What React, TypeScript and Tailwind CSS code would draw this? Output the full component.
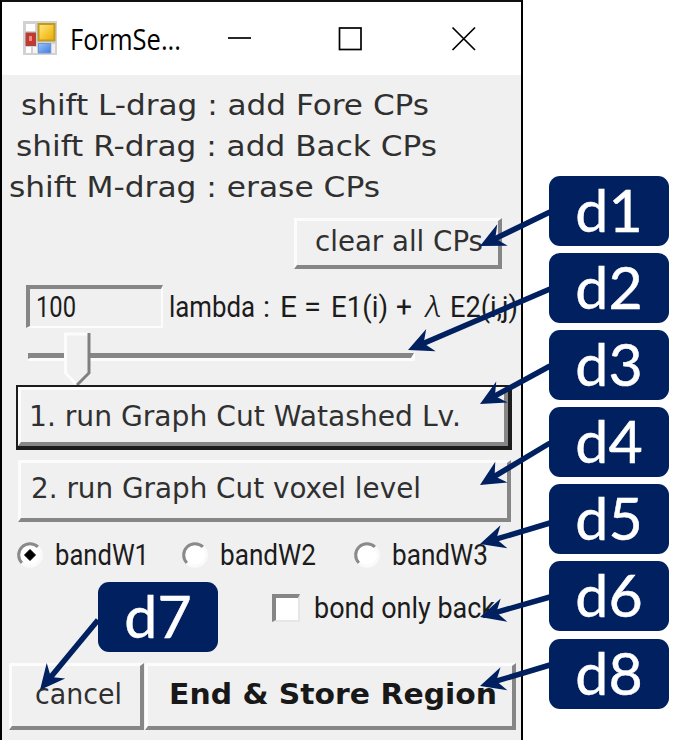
import { useLayoutEffect, useRef, useState, type ReactNode } from "react";

/** Single line of text stretched or squeezed horizontally to a given width. */
function Fit({ w, className = "", children }: { w: number; className?: string; children: ReactNode }) {
  const ref = useRef<HTMLSpanElement>(null);
  const [scale, setScale] = useState(1);
  useLayoutEffect(() => {
    const el = ref.current;
    if (!el) return;
    el.style.transform = "none";
    const natural = el.getBoundingClientRect().width;
    const next = w / natural;
    el.style.transform = `scaleX(${next})`;
    setScale(next);
  }, [w]);
  return (
    <span className={`block shrink-0 whitespace-pre ${className}`} style={{ width: w }}>
      <span ref={ref} className="inline-block origin-left" style={{ transform: `scaleX(${scale})` }}>
        {children}
      </span>
    </span>
  );
}

const verdana = "font-['DejaVu_Sans',sans-serif] text-[29px] text-[#303030]";
const gothic = "font-[Roboto,'Noto_Sans',sans-serif] text-[30px] text-[#1c1c1c]";
const raised =
  "flex shrink-0 items-center border-t-[3px] border-l-[3px] border-r-4 border-b-4 border-t-[#fcfcfc] border-l-[#fcfcfc] border-r-[#868686] border-b-[#868686] bg-[#f0f0f0]";

function FormIcon() {
  return (
    <svg className="h-[35px] w-[35px] shrink-0" viewBox="0 0 35 35">
      <defs>
        <linearGradient id="gold" x1="0" y1="0" x2="1" y2="1">
          <stop offset="0" stopColor="#ffe88a" />
          <stop offset="0.6" stopColor="#f5c42c" />
          <stop offset="1" stopColor="#e0a810" />
        </linearGradient>
        <linearGradient id="blue" x1="0" y1="0" x2="1" y2="1">
          <stop offset="0" stopColor="#9cc4fb" />
          <stop offset="1" stopColor="#3f7be0" />
        </linearGradient>
      </defs>
      <rect x="0" y="0" width="34" height="34" fill="#d2d2d2" />
      <rect x="3" y="3" width="9" height="7" fill="#fff" />
      <rect x="3" y="26" width="5" height="6" fill="#fff" />
      <rect x="10" y="26" width="4" height="6" fill="#f4f4f4" />
      <rect x="29" y="23" width="3" height="9" fill="#f0f0f0" />
      <rect x="15.500" y="3" width="16" height="16.500" fill="url(#gold)" stroke="#c39a1c" strokeWidth="2" />
      <rect x="3.500" y="12.500" width="8.500" height="11.500" fill="#c9372c" stroke="#b0403a" strokeWidth="2" />
      <rect x="6" y="15" width="3" height="5" fill="#e88d84" />
      <rect x="15.500" y="22.500" width="12" height="9.500" fill="url(#blue)" stroke="#6a97e0" strokeWidth="1" />
    </svg>
  );
}

function Radio({ checked = false }: { checked?: boolean }) {
  return (
    <svg className="h-[26px] w-[26px] shrink-0" viewBox="0 0 26 26">
      <circle cx="13" cy="13" r="10.500" fill="#fff" />
      <path d="M5 21A11 11 0 0 1 21 5" fill="none" stroke="#8a8a8a" strokeWidth="3" />
      <path d="M21 5A11 11 0 0 1 5 21" fill="none" stroke="#fafafa" strokeWidth="3" />
      {checked && <path d="M13 7.500L18.500 13L13 18.500L7.500 13Z" fill="#000" stroke="#000" strokeWidth="1" strokeLinejoin="round" />}
    </svg>
  );
}

const tag =
  "flex h-[70px] w-[120px] shrink-0 items-center justify-center rounded-[11px] bg-[#002060] pb-[2px] font-[Lato,sans-serif] text-[59px] leading-[68px] text-white [-webkit-text-stroke:0.5px_white]";

const arrows: [number, number, number, number][] = [
  [550, 212, 480, 246],
  [550, 289, 408, 350],
  [550, 366, 480, 404],
  [550, 443, 480, 485],
  [550, 523, 480, 544],
  [550, 597, 480, 617],
  [550, 665, 480, 686],
  [98, 620, 40, 690],
];

function Arrow({ p }: { p: [number, number, number, number] }) {
  const [x1, y1, x2, y2] = p;
  const angle = (Math.atan2(y2 - y1, x2 - x1) * 180) / Math.PI;
  const length = Math.hypot(x2 - x1, y2 - y1);
  return (
    <g transform={`translate(${x2} ${y2}) rotate(${angle})`}>
      <path d={`M${-length} 0H-14`} stroke="#002060" strokeWidth="5.500" />
      <path d="M0 0L-25 -12L-17 0L-25 12Z" fill="#002060" />
    </g>
  );
}

export default function App() {
  return (
    <div className="relative flex h-[755px] w-[684px] overflow-hidden bg-white">
      <div className="flex h-[740px] w-[523px] shrink-0 flex-col border-t-2 border-r-2 border-l-2 border-t-[#111] border-r-black border-l-black bg-[#f0f0f0]">
        <header className="flex h-[73px] shrink-0 items-center bg-white pl-[21px]">
          <FormIcon />
          <Fit w={111} className="ml-3 font-['Open_Sans',sans-serif] text-[29px] leading-[69px] text-black">FormSe...</Fit>
          <svg className="ml-[46px] h-[26px] w-[250px]" viewBox="0 0 250 26" fill="none" stroke="#000" strokeWidth="1.700">
            <path d="M1 12H24" />
            <rect x="112.500" y="2" width="21.500" height="21.500" />
            <path d="M225.500 1.500L248 24M248 1.500L225.500 24" />
          </svg>
        </header>

        <div className={`h-[143px] shrink-0 pt-[10px] leading-[41px] ${verdana}`}>
          <Fit w={408} className="ml-[19px]">shift L-drag : add Fore CPs</Fit>
          <Fit w={421} className="ml-[14px]">shift R-drag : add Back CPs</Fit>
          <Fit w={371} className="ml-[7px]">shift M-drag : erase CPs</Fit>
        </div>

        <button className={`${raised} ml-[292px] h-[51px] w-[208px] pb-[3px] pl-[18px] leading-[41px] ${verdana}`}>
          <Fit w={168}>clear all CPs</Fit>
        </button>

        <div className={`mt-4 flex h-[43px] shrink-0 pl-6 leading-[43px] ${gothic}`}>
          <div className="flex w-[137px] items-center border-t-4 border-r-2 border-b-2 border-l-4 border-t-[#868686] border-r-[#fcfcfc] border-b-[#fcfcfc] border-l-[#868686] pb-[2px] pl-[6px] leading-[35px]">
            <Fit w={40}>100</Fit>
          </div>
          <Fit w={86} className="ml-[6px]">lambda</Fit>
          <Fit w={7} className="ml-[8px]">:</Fit>
          <Fit w={17} className="ml-[10px]">E</Fit>
          <Fit w={17} className="ml-[7px]">=</Fit>
          <Fit w={57} className="ml-[10px]">E1(i)</Fit>
          <Fit w={16} className="ml-[8px]">+</Fit>
          <Fit w={17} className="ml-[13px] font-light italic">λ</Fit>
          <Fit w={68} className="ml-[8px]">E2(i,j)</Fit>
        </div>

        <svg className="h-[57px] w-[517px] shrink-0" viewBox="2 328 517 57" overflow="visible">
          <rect x="28" y="353" width="387" height="8" fill="#fcfcfc" />
          <path d="M28 353H414L411 358H30L28 359Z" fill="#868686" />
          <path d="M64 332H90V373L78 386L64 373Z" fill="#f0f0f0" />
          <path d="M77 385L65.500 373V334H88" fill="none" stroke="#fcfcfc" strokeWidth="3" />
          <path d="M89 333V373L77 385" fill="none" stroke="#808080" strokeWidth="3" />
        </svg>

        <div className="ml-[14px] flex h-[65px] w-[496px] shrink-0 border-t-2 border-r-4 border-b-4 border-l-2 border-[#1c1c1c]">
          <button className={`${raised} flex-1 pl-[8px] leading-[52px] ${verdana}`}>
            <Fit w={432}>1. run Graph Cut Watashed Lv.</Fit>
          </button>
        </div>

        <button className={`${raised} mt-[10px] ml-[16px] h-[62px] w-[493px] pb-[6px] pl-[10px] leading-[48px] ${verdana}`}>
          <Fit w={390}>2. run Graph Cut voxel level</Fit>
        </button>

        <div className={`mt-[12px] flex h-[42px] shrink-0 items-center pl-[15px] leading-[42px] ${gothic}`}>
          <Radio checked />
          <Fit w={94} className="ml-[12px]">bandW1</Fit>
          <span className="w-[33px] shrink-0" />
          <Radio />
          <Fit w={96} className="ml-[12px]">bandW2</Fit>
          <span className="w-[38px] shrink-0" />
          <Radio />
          <Fit w={96} className="ml-[12px]">bandW3</Fit>
        </div>

        <div className={`mt-[11px] flex h-[42px] shrink-0 items-center pl-[270px] leading-[42px] ${gothic}`}>
          <span className="h-[28px] w-[28px] shrink-0 border-t-4 border-r-2 border-b-2 border-l-4 border-t-[#868686] border-r-[#e6e6e6] border-b-[#e6e6e6] border-l-[#868686] bg-white" />
          <Fit w={181} className="ml-[14px]">bond only back</Fit>
        </div>

        <div className="mt-[34px] flex h-[67px] shrink-0 gap-[1px] pl-[7px]">
          <button className={`${raised} w-[135px] pb-[3px] pl-[23px] leading-[57px] ${verdana}`}>
            <Fit w={87}>cancel</Fit>
          </button>
          <button className={`${raised} w-[371px] pb-[3px] pl-[20px] leading-[57px] ${verdana}`}>
            <Fit w={328} className="-ml-[4px] font-bold text-[#181818]">End &amp; Store Region</Fit>
          </button>
        </div>
      </div>

      <aside className="ml-[26px] flex w-[120px] flex-col gap-[7px] pt-[176px]">
        {["d1", "d2", "d3", "d4", "d5", "d6"].map((name) => (
          <div key={name} className={tag}>{name}</div>
        ))}
        <div className={`${tag} mt-[1px]`}>d8</div>
      </aside>

      <svg className="pointer-events-none absolute inset-0 h-[755px] w-[684px]" viewBox="0 0 684 755">
        {arrows.map((p) => (
          <Arrow key={p.join()} p={p} />
        ))}
      </svg>
      <div className={`${tag} absolute top-[582px] left-[98px]`}>d7</div>
    </div>
  );
}
